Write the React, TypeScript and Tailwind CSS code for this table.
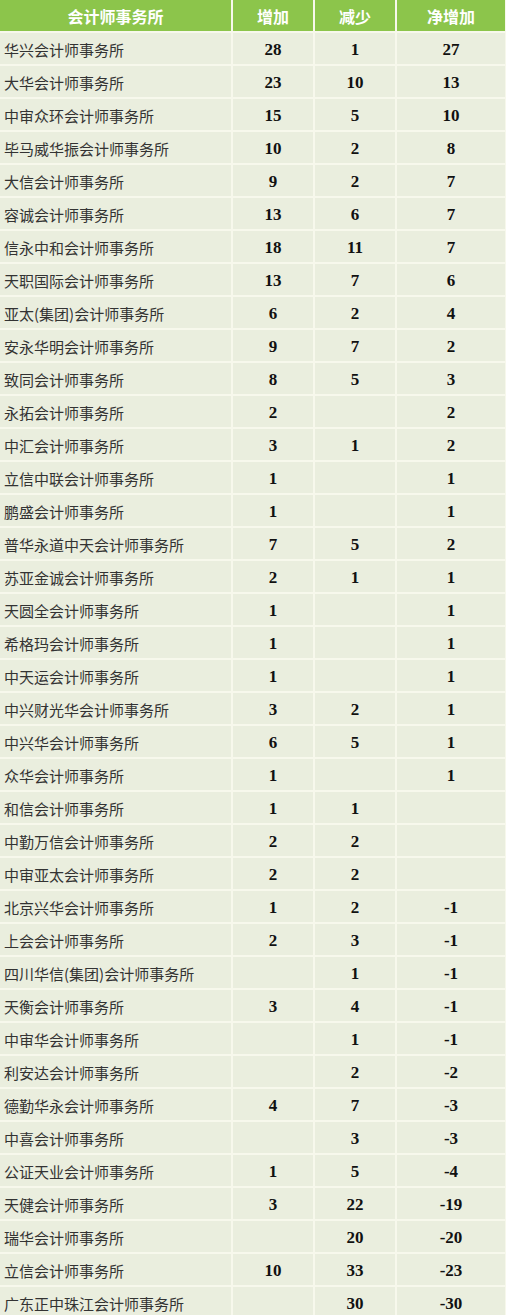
const rows: [string, string, string, string][] = [
  ['华兴会计师事务所', '28', '1', '27'],
  ['大华会计师事务所', '23', '10', '13'],
  ['中审众环会计师事务所', '15', '5', '10'],
  ['毕马威华振会计师事务所', '10', '2', '8'],
  ['大信会计师事务所', '9', '2', '7'],
  ['容诚会计师事务所', '13', '6', '7'],
  ['信永中和会计师事务所', '18', '11', '7'],
  ['天职国际会计师事务所', '13', '7', '6'],
  ['亚太(集团)会计师事务所', '6', '2', '4'],
  ['安永华明会计师事务所', '9', '7', '2'],
  ['致同会计师事务所', '8', '5', '3'],
  ['永拓会计师事务所', '2', '', '2'],
  ['中汇会计师事务所', '3', '1', '2'],
  ['立信中联会计师事务所', '1', '', '1'],
  ['鹏盛会计师事务所', '1', '', '1'],
  ['普华永道中天会计师事务所', '7', '5', '2'],
  ['苏亚金诚会计师事务所', '2', '1', '1'],
  ['天圆全会计师事务所', '1', '', '1'],
  ['希格玛会计师事务所', '1', '', '1'],
  ['中天运会计师事务所', '1', '', '1'],
  ['中兴财光华会计师事务所', '3', '2', '1'],
  ['中兴华会计师事务所', '6', '5', '1'],
  ['众华会计师事务所', '1', '', '1'],
  ['和信会计师事务所', '1', '1', ''],
  ['中勤万信会计师事务所', '2', '2', ''],
  ['中审亚太会计师事务所', '2', '2', ''],
  ['北京兴华会计师事务所', '1', '2', '-1'],
  ['上会会计师事务所', '2', '3', '-1'],
  ['四川华信(集团)会计师事务所', '', '1', '-1'],
  ['天衡会计师事务所', '3', '4', '-1'],
  ['中审华会计师事务所', '', '1', '-1'],
  ['利安达会计师事务所', '', '2', '-2'],
  ['德勤华永会计师事务所', '4', '7', '-3'],
  ['中喜会计师事务所', '', '3', '-3'],
  ['公证天业会计师事务所', '1', '5', '-4'],
  ['天健会计师事务所', '3', '22', '-19'],
  ['瑞华会计师事务所', '', '20', '-20'],
  ['立信会计师事务所', '10', '33', '-23'],
  ['广东正中珠江会计师事务所', '', '30', '-30'],
]

const cjk = "font-['Noto_Sans_CJK_SC','Noto_Sans',sans-serif]"
const num = "font-['Liberation_Serif','Times_New_Roman',serif]"

const head = `bg-[#8cc54b] text-white font-bold text-[16px] flex items-center justify-center ${cjk}`
const numCell = `bg-[#eaeede] text-[#111] font-bold text-[17px] flex items-center justify-center pt-[3px] ${num}`

export default function App() {
  return (
    <div className="w-[506px] h-[1315px] overflow-hidden bg-[#f7f8ec]">
      <div className="grid grid-cols-[231px_80px_80px_108px] gap-[2px] auto-rows-[31px] pr-[3px]">
        {/* header */}
        <div className={head}>会计师事务所</div>
        <div className={head}>增加</div>
        <div className={head}>减少</div>
        <div className={head}>净增加</div>

        {rows.map(([name, add, sub, net]) => (
          <>
            <div key={name} className={`bg-[#eaeede] text-[#333] text-[15px] flex items-center pl-[4px] pt-[3px] whitespace-nowrap ${cjk}`}>{name}</div>
            <div className={numCell}>{add}</div>
            <div className={numCell}>{sub}</div>
            <div className={numCell}>{net}</div>
          </>
        ))}
      </div>
    </div>
  )
}
